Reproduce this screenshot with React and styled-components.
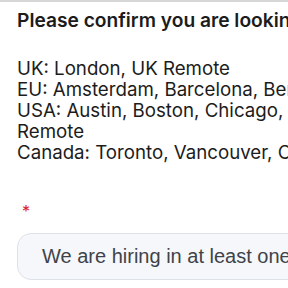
import React from 'react'
import styled, { createGlobalStyle } from 'styled-components'

const Global = createGlobalStyle`
  body {
    margin: 0;
    background: #ffffff;
  }
`

const Page = styled.div`
  width: 288px;
  height: 288px;
  overflow: hidden;
  border-top: 2px solid #d6d6d6;
  box-sizing: border-box;
  padding: 6px 0 0 17px;
  font-family: 'Inter', 'Noto Sans', sans-serif;
  color: #1c1c1c;
`

const Title = styled.div`
  font-size: 19.2px;
  font-weight: 600;
  line-height: 24px;
  white-space: nowrap;
`

const Locations = styled.div`
  margin-top: 26px;
  font-size: 18.7px;
  line-height: 21px;
  width: 300px;
`

const Line = styled.div`
  white-space: nowrap;
`

const Required = styled.div`
  margin-top: 38px;
  margin-left: 5px;
  color: #e02020;
  font-size: 16px;
  line-height: 20px;
`

const Field = styled.div`
  margin-top: 12px;
  width: 320px;
  height: 47px;
  box-sizing: border-box;
  border: 1px solid #dde1e8;
  border-radius: 14px;
  background: #f5f7fb;
  display: flex;
  align-items: center;
  padding-left: 24px;
  font-family: 'Liberation Sans', Arial, sans-serif;
  font-size: 20px;
  color: #3f4349;
  white-space: nowrap;
`

const App = () => (
  <Page>
    <Global />
    <Title>Please confirm you are looking to work in one of these locations</Title>
    <Locations>
      <Line>UK: London, UK Remote</Line>
      <Line>EU: Amsterdam, Barcelona, Berlin, EU Remote</Line>
      <Line>USA: Austin, Boston, Chicago,</Line>
      <Line>Remote</Line>
      <Line>Canada: Toronto, Vancouver, Canada Remote</Line>
    </Locations>
    <Required>*</Required>
    <Field>We are hiring in at least one of these locations</Field>
  </Page>
)

export default App
